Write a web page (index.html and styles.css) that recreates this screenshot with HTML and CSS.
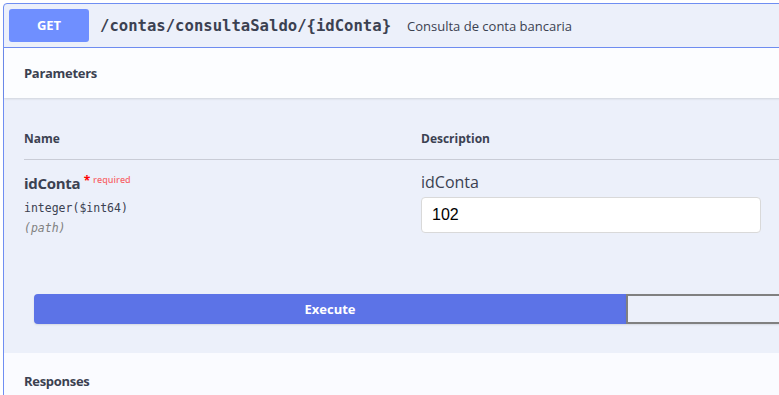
FILE: index.html
```html
<!DOCTYPE html>
<html lang="pt">

<head>
    <meta charset="UTF-8">
    <title>consultaSaldo</title>
    <link rel="stylesheet" href="styles.css">
</head>

<body>
    <div class="wrapper">
        <div class="opblock">
            <!-- Summary bar -->
            <div class="summary">
                <span class="method">GET</span>
                <span class="path">/contas/consultaSaldo/{idConta}</span>
                <span class="summary-desc">Consulta de conta bancaria</span>
            </div>

            <!-- Parameters -->
            <div class="section-header">
                <h4>Parameters</h4>
            </div>

            <div class="parameters">
                <div class="param-row head">
                    <div class="col-name">Name</div>
                    <div class="col-desc">Description</div>
                </div>
                <div class="param-row body">
                    <div class="col-name">
                        <div class="param-name">idConta <span class="star">*</span><span class="required">required</span></div>
                        <div class="param-type">integer($int64)</div>
                        <div class="param-in">(path)</div>
                    </div>
                    <div class="col-desc">
                        <div class="param-label">idConta</div>
                        <input type="text" class="param-input" value="102">
                    </div>
                </div>
            </div>

            <div class="execute-wrapper">
                <button class="btn execute">Execute</button>
                <button class="btn clear"></button>
            </div>

            <!-- Responses -->
            <div class="section-header responses">
                <h4>Responses</h4>
            </div>
        </div>
    </div>
</body>

</html>
```

FILE: styles.css
```css
/* Basic reset */

* {
    margin: 0;
    padding: 0;
    box-sizing: border-box;
}

body {
    font-family: "Open Sans", sans-serif;
    background-color: #fff;
    color: #3b4151;
    overflow: hidden;
}

.wrapper {
    padding: 3px 0 0 3px;
}

.opblock {
    width: 1250px;
    background-color: #ecf0fa;
    border: 1px solid #6f8ef2;
    border-radius: 4px;
}

.summary {
    display: flex;
    align-items: center;
    height: 44px;
    padding: 0 5px;
    border-bottom: 1px solid #6f8ef2;
}

.method {
    width: 80px;
    height: 33px;
    line-height: 33px;
    text-align: center;
    background-color: #6f8fff;
    color: #fff;
    font-size: 13px;
    font-weight: bold;
    border-radius: 3px;
}

.path {
    margin-left: 11px;
    font-family: "DejaVu Sans Mono", monospace;
    font-size: 15.6px;
    font-weight: 600;
    color: #3b4151;
}

.summary-desc {
    margin-left: 16px;
    font-size: 13px;
    color: #3b4151;
}

.section-header {
    display: flex;
    align-items: center;
    height: 50px;
    padding: 0 20px;
    background-color: #fcfdff;
    box-shadow: 0 1px 2px rgba(0, 0, 0, 0.12);
}

.section-header h4 {
    font-size: 13px;
    font-weight: bold;
    letter-spacing: -0.3px;
}

.parameters {
    padding: 26px 20px 0;
}

.param-row {
    display: grid;
    grid-template-columns: 397px 1fr;
}

.param-row.head {
    font-size: 12px;
    font-weight: bold;
    height: 36px;
    padding-bottom: 6px;
    align-items: center;
    border-bottom: 1px solid #c9ccd6;
}

.param-row.body {
    padding-top: 13px;
}

.param-name {
    font-size: 15px;
    font-weight: bold;
    letter-spacing: -0.3px;
}

.star {
    color: #f00;
    font-size: 12px;
    position: relative;
    top: -4px;
}

.required {
    color: rgba(255, 0, 0, 0.6);
    font-size: 9px;
    font-weight: 600;
    position: relative;
    top: -6px;
    margin-left: 3px;
    letter-spacing: 0;
}

.param-type {
    margin-top: 8px;
    font-family: "DejaVu Sans Mono", monospace;
    font-size: 11.5px;
    color: #3b4151;
}

.param-in {
    margin-top: 6px;
    font-family: "DejaVu Sans Mono", monospace;
    font-size: 11.5px;
    font-style: italic;
    color: #808080;
}

.param-label {
    font-size: 16px;
    line-height: 20px;
    margin-top: -1px;
}

.param-input {
    display: block;
    margin-top: 5px;
    width: 340px;
    height: 36px;
    padding: 0 10px;
    font-family: "Liberation Sans", Arial, sans-serif;
    font-size: 16px;
    color: #000;
    background: #fff;
    border: 1px solid #d9d9d9;
    border-radius: 4px;
}

.execute-wrapper {
    display: flex;
    padding: 59px 30px 29px;
}

.btn {
    width: 592px;
    height: 30px;
    font-family: "Open Sans", sans-serif;
    font-size: 13px;
    font-weight: bold;
    box-shadow: 0 1px 2px rgba(0, 0, 0, 0.1);
}

.execute {
    background-color: #5c73e7;
    color: #fff;
    border: none;
    border-radius: 4px 0 0 4px;
}

.clear {
    background-color: transparent;
    border: 2px solid #808080;
    border-radius: 0 4px 4px 0;
}

.section-header.responses {
    align-items: flex-start;
    padding-top: 19px;
    height: 60px;
    background-color: #fafbff;
    box-shadow: none;
}
```
